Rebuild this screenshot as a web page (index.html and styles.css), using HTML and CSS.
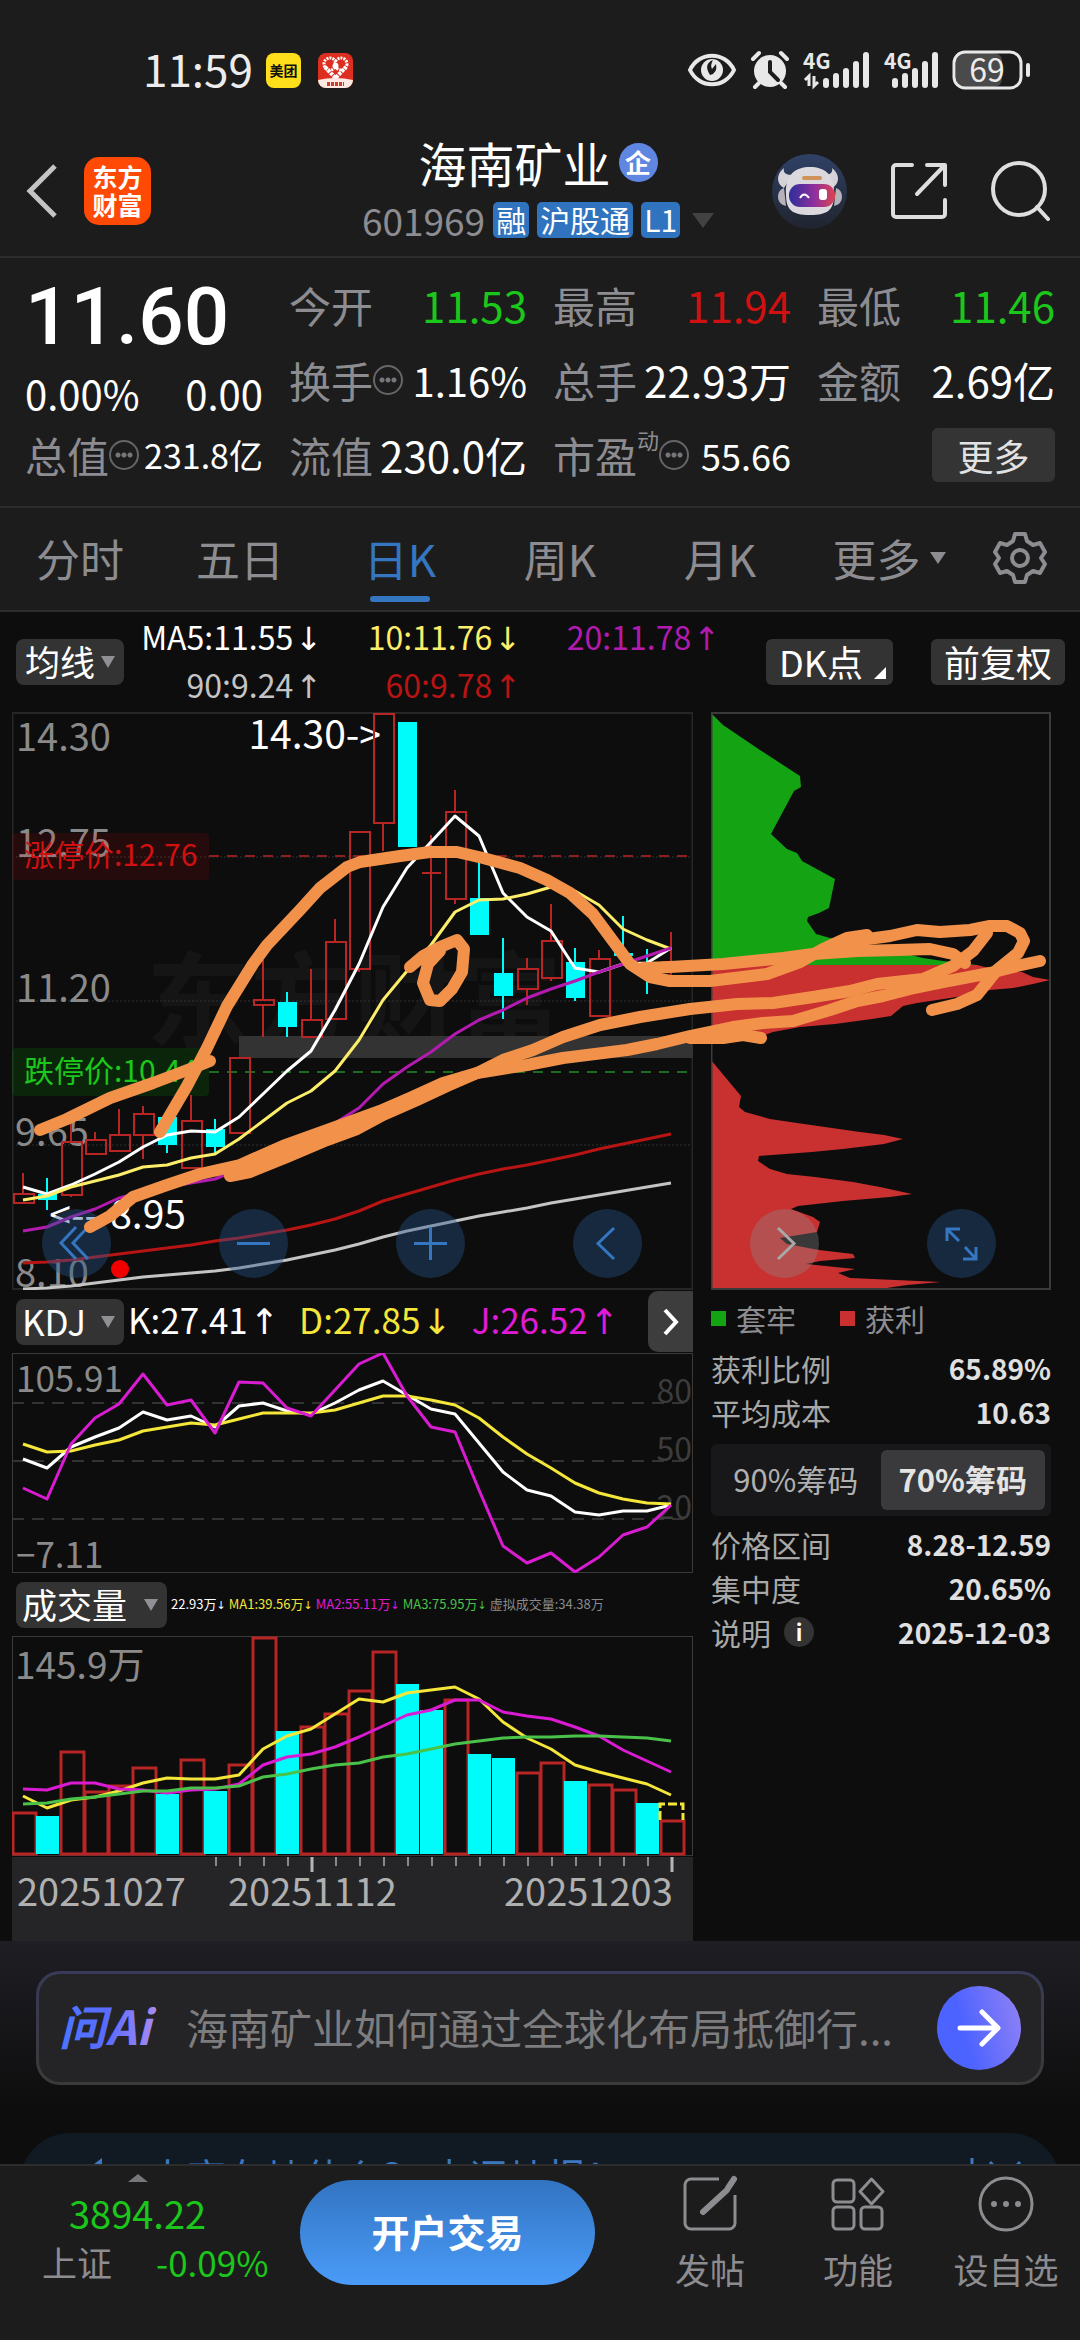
FILE: index.html
```html
<!DOCTYPE html>
<html lang="zh-CN">
<head>
<meta charset="utf-8">
<meta name="viewport" content="width=device-width">
<title>海南矿业 601969</title>
<link rel="stylesheet" href="styles.css">
</head>
<body>
<div class="app">
  <div class="status">
    <span class="clock">11:59</span>
    <span class="app-dot app-dot-yellow">美团</span>
    <span class="app-dot app-dot-red">
      <svg viewBox="0 0 35 35"><circle cx="12" cy="11" r="6" fill="none" stroke="#fff" stroke-width="3" stroke-dasharray="2 1"/><circle cx="23" cy="11" r="6" fill="none" stroke="#fff" stroke-width="3" stroke-dasharray="2 1"/><path d="M7 14 17.500 25 28 14" fill="none" stroke="#fff" stroke-width="4" stroke-dasharray="3 1"/><circle cx="17.500" cy="13" r="3" fill="#fff"/><path d="M0 27q17-4 35 0v8H0z" fill="#ffe9e2"/><path d="M9 31h17" stroke="#c8412f" stroke-width="4" stroke-dasharray="3 1"/></svg>
    </span>
    <span class="status-icons">
      <svg width="50" height="36" viewBox="0 0 50 36"><path d="M3 18C12-1 38-1 47 18 38 37 12 37 3 18z" fill="none" stroke="#e8e8e8" stroke-width="4"/><circle cx="25" cy="18" r="11" fill="#e8e8e8"/><path d="M26 8q-10 4-3 15 8-2 6-11l-4 5q-2-4 1-9z" fill="#1c1c1c"/></svg>
      <svg class="gap-alarm" width="40" height="38" viewBox="0 0 40 38"><circle cx="20" cy="20" r="16" fill="#e8e8e8"/><path d="M3 8l6-6M37 8l-6-6M9 32l-4 4M31 32l4 4" stroke="#e8e8e8" stroke-width="4" stroke-linecap="round"/><path d="M20 11v10l8 8" fill="none" stroke="#1c1c1c" stroke-width="4" stroke-linecap="round"/></svg>
      <svg class="gap-signal" width="68" height="38" viewBox="0 0 68 38"><text x="0" y="18" class="net">4G</text><path d="M6 35V25l-4 4M11 25v10l4-4" fill="none" stroke="#e8e8e8" stroke-width="3"/><path d="M23 30v4M33 25v9M43 20v14M53 13v21M63 4v30" stroke="#e8e8e8" stroke-width="6" stroke-linecap="round"/></svg>
      <svg class="gap-signal" width="56" height="38" viewBox="0 0 56 38"><text x="0" y="18" class="net">4G</text><path d="M11 30v4M21 25v9M31 20v14M41 13v21M51 4v30" stroke="#e8e8e8" stroke-width="6" stroke-linecap="round"/></svg>
      <svg class="gap-battery" width="80" height="42" viewBox="0 0 80 42"><rect x="4" y="4" width="46" height="34" rx="8" fill="#4a4a4a"/><rect x="2" y="3" width="67" height="36" rx="11" fill="none" stroke="#e8e8e8" stroke-width="3"/><path d="M76 16v10" stroke="#e8e8e8" stroke-width="4" stroke-linecap="round"/><text x="35" y="33" class="charge">69</text></svg>
    </span>
  </div>

  <header class="header">
    <div class="header-left">
      <button class="icon-btn" aria-label="返回"><svg width="34" height="56" viewBox="0 0 34 56"><path d="M30 3 5 28l25 25" fill="none" stroke="#c4c4c4" stroke-width="5"/></svg></button>
      <a class="brand" href="#">东方<br>财富</a>
    </div>
    <div class="stock">
      <h1>海南矿业<span class="verify">企</span></h1>
      <div class="code-row">
        <span class="code">601969</span><span class="tag">融</span><span class="tag">沪股通</span><span class="tag">L1</span>
        <svg class="code-arrow" width="22" height="15" viewBox="0 0 22 15"><path d="M0 0h22L11 15z" fill="#424245"/></svg>
      </div>
    </div>
    <div class="header-right">
      <button class="icon-btn" aria-label="助手">
        <svg width="75" height="75" viewBox="0 0 75 75">
          <defs><linearGradient id="sky" x1="0" y1="0" x2="0" y2="1"><stop offset="0" stop-color="#2f4166"/><stop offset="1" stop-color="#20242e"/></linearGradient><linearGradient id="visor"><stop offset="0" stop-color="#2d2f9c"/><stop offset=".55" stop-color="#8f2f9e"/><stop offset="1" stop-color="#dc4450"/></linearGradient></defs>
          <circle cx="37.500" cy="37.500" r="37.500" fill="url(#sky)"/>
          <path d="M12 14C4 20 4 30 12 34l8-13C13 21 11 18 12 14zM60 14c8 6 8 16 0 20l-8-13c7 0 9-3 8-7z" fill="#d6d2d8"/>
          <path d="M12 34q-6 2-6 9t8 9zM64 34q6 2 6 9t-8 9z" fill="#b6b2ba"/>
          <path d="M14 40C13 20 24 13 38 13s25 7 24 27c0 16-6 21-24 21S14 56 14 40z" fill="#dcd9de"/>
          <rect x="30" y="22" width="20" height="4" rx="2" fill="#cf935a"/>
          <rect x="17" y="30" width="46" height="23" rx="11" fill="url(#visor)"/>
          <path d="M28 44q4-7 9 0" fill="none" stroke="#fff" stroke-width="2"/><rect x="47" y="35" width="8" height="11" rx="3" fill="#fff"/>
        </svg>
      </button>
      <button class="icon-btn" aria-label="分享"><svg width="58" height="58" viewBox="0 0 58 58"><path d="M22 3H6a3 3 0 0 0-3 3v46a3 3 0 0 0 3 3h46a3 3 0 0 0 3-3V38M37 3h18v20M54 4 27 32" fill="none" stroke="#dedede" stroke-width="4" stroke-linecap="round" stroke-linejoin="round"/></svg></button>
      <button class="icon-btn" aria-label="搜索"><svg width="60" height="60" viewBox="0 0 60 60"><circle cx="28" cy="28" r="26" fill="none" stroke="#dedede" stroke-width="4"/><path d="M46 46l11 12" stroke="#dedede" stroke-width="4" stroke-linecap="round"/></svg></button>
    </div>
  </header>

  <main class="content">
    <section class="quote">
      <div class="price-block">
        <div class="price">11.60</div>
        <div class="change"><span>0.00%</span><span>0.00</span></div>
      </div>
      <div class="cell"><span class="lbl">今开</span><span class="val down">11.53</span></div>
      <div class="cell"><span class="lbl">最高</span><span class="val up">11.94</span></div>
      <div class="cell"><span class="lbl">最低</span><span class="val down">11.46</span></div>
      <div class="cell"><span class="lbl">换手<i class="more-dot"></i></span><span class="val val-40">1.16%</span></div>
      <div class="cell"><span class="lbl">总手</span><span class="val">22.93万</span></div>
      <div class="cell"><span class="lbl">金额</span><span class="val">2.69亿</span></div>
      <div class="cell"><span class="lbl">总值<i class="more-dot"></i></span><span class="val val-34">231.8亿</span></div>
      <div class="cell"><span class="lbl">流值</span><span class="val">230.0亿</span></div>
      <div class="cell"><span class="lbl">市盈<small>动</small><i class="more-dot"></i></span><span class="val val-36">55.66</span></div>
      <div class="cell cell-end"><button class="more-btn">更多</button></div>
    </section>

    <nav class="tabs">
      <button>分时</button><button>五日</button><button class="active">日K</button><button>周K</button><button>月K</button><button class="tab-more">更多<i class="tri"></i></button>
      <button class="gear" aria-label="设置"><svg width="54" height="54" viewBox="0 0 54 54"><path d="M22 3h10l2 7 6 4 7-2 5 9-4 6 4 6-5 9-7-2-6 4-2 7H22l-2-7-6-4-7 2-5-9 4-6-4-6 5-9 7 2 6-4z" fill="none" stroke="#8c8c91" stroke-width="4" stroke-linejoin="round"/><circle cx="27" cy="27" r="8" fill="none" stroke="#8c8c91" stroke-width="4"/></svg></button>
    </nav>

    <section class="board">
      <div class="ma-bar">
        <label class="pick pick-s"><select aria-label="均线"><option>均线</option></select></label>
        <div class="ma-grid">
          <span class="c-white">MA5:11.55<b>↓</b></span><span class="c-yellow">10:11.76<b>↓</b></span><span class="c-purple">20:11.78<b>↑</b></span>
          <span class="c-grey">90:9.24<b>↑</b></span><span class="c-red">60:9.78<b>↑</b></span>
        </div>
        <div class="ma-actions">
          <button class="chip chip-corner">DK点</button>
          <button class="chip">前复权</button>
        </div>
      </div>

      <div class="charts">
        <svg class="chart" id="kline" viewBox="12 712 681 578">
          <text x="146" y="1040" class="watermark">东方财富</text>
          <path d="M12 857H692M12 1001H692M12 1145H692" stroke="#333" stroke-dasharray="2 2"/>
          <rect x="12.500" y="713" width="680" height="576" fill="none" stroke="#262626" stroke-width="2"/>
          <g class="axis-text"><text x="16" y="751">14.30</text><text x="16" y="857">12.75</text><text x="16" y="1002">11.20</text><text x="15" y="1146">9.65</text><text x="15" y="1287">8.10</text></g>
          <rect x="239" y="1036" width="454" height="22" fill="#333"/>
          <rect x="12" y="833" width="197" height="47" rx="4" fill="#f00" fill-opacity=".1"/>
          <rect x="12" y="1048" width="197" height="48" rx="4" fill="#0f0" fill-opacity=".1"/>
          <path d="M209 856H692" stroke="#8e1f1f" stroke-width="2" stroke-dasharray="10 8"/>
          <path d="M209 1072H692" stroke="#1c6b20" stroke-width="2" stroke-dasharray="10 8"/>
          <text x="24" y="866" class="limit limit-up">涨停价:12.76</text>
          <text x="24" y="1082" class="limit limit-down">跌停价:10.44</text>
          <text x="381" y="749" class="mark">14.30-&gt;</text>
          <text x="186" y="1229" class="mark"><tspan x="98">&lt;--</tspan><tspan x="186">8.95</tspan></text>
          <g id="kline-data"></g>
          <circle cx="120" cy="1269" r="9" fill="#f00000"/>
        </svg>
        <svg class="chart" viewBox="711 712 340 578">
          <path d="M711 713L723 725 760 750 800 776 801 787 794 791 771 834 787 849 797 853 802 861 835 879 829 908 819 913 808 917 807 921 816 934 830 938 877 947 923 958 943 961 977 965H711z" fill="#13a313"/>
          <path d="M711 965H977L993 969 1022 972 1033 977 1050 980 1033 984 1013 988 990 990 963 996 937 1000 917 1003 903 1006 891 1016 872 1019 835 1024 800 1027 773 1032 765 1035 711 1038z" fill="#c93030"/>
          <path d="M711 1060L741 1096 739 1107 745 1112 770 1119 797 1123 832 1128 860 1132 884 1135 903 1139 884 1144 843 1149 812 1152 759 1156 758 1161 770 1169 787 1174 815 1177 853 1182 880 1187 912 1194 890 1197 843 1201 798 1206 791 1209 813 1217 820 1222 817 1232 805 1234 780 1238 787 1244 819 1250 853 1254 855 1258 820 1261 806 1264 855 1269 838 1273 850 1278 941 1282 907 1285 880 1289H711z" fill="#c93030"/>
          <path d="M711.500 713V1289H1050V713z" fill="none" stroke="#3a3a3a" stroke-width="2"/>
        </svg>
        <div class="chart-tools">
          <button aria-label="后退"><svg viewBox="0 0 69 69"><path d="M34 18 19 34l15 16M46 18 31 34l15 16" /></svg></button>
          <button aria-label="缩小"><svg viewBox="0 0 69 69"><path d="M18 34.500h33"/></svg></button>
          <button aria-label="放大"><svg viewBox="0 0 69 69"><path d="M18 34.500h33M34.500 18v33"/></svg></button>
          <button aria-label="左移"><svg viewBox="0 0 69 69"><path d="M41 19 25 34.500 41 50"/></svg></button>
          <button class="off" aria-label="右移"><svg viewBox="0 0 69 69"><path d="M28 19 44 34.500 28 50"/></svg></button>
          <button aria-label="全屏"><svg viewBox="0 0 69 69"><path d="M20 32V20h13M20 20l12 12M49 38v12H36M49 50 38 38"/></svg></button>
        </div>
        <svg class="doodle" viewBox="12 712 1039 578">
          <path d="M160 1132 187 1086 207 1048 227 1006 253 964 267 945 300 910 320 888 347 867 360 862 400 856 430 852 457 852 483 858 520 868 547 880 570 893 593 914 613 941 630 964 650 977 670 981 710 981 767 974 800 962 823 949 847 938 867 935"/>
          <path d="M643 968 670 967 723 964 783 958 813 954 857 951 897 950 930 949 953 954 965 963"/>
          <path d="M823 951 853 941 890 936 917 930 940 932 970 930 990 926 1007 926 1020 933 1024 941 1018 953 997 970 977 995 957 1004 932 1010"/>
          <path d="M987 933 973 951 953 966 923 979 877 984 850 991 813 997 773 1003 737 1004 690 1009 640 1017 600 1025 563 1037 533 1050 503 1060 477 1073 447 1086 417 1100 383 1115 357 1129 327 1140 287 1157 250 1172 230 1176"/>
          <path d="M1040 961 1017 966 990 973 943 982 910 989 883 996 857 1001 830 1010 793 1021 763 1023 733 1027 690 1036 657 1044 627 1050 563 1058 527 1065 477 1073 443 1083 410 1098 380 1111 333 1128 283 1146 240 1165 200 1174 167 1185 133 1197 110 1216 90 1227"/>
          <path d="M690 1038 723 1038 743 1035 761 1038"/>
          <path d="M40 1130 67 1119 110 1098 153 1083 190 1069 210 1061"/>
          <path d="M410 967 423 956 440 947 457 940 464 949 462 972 452 989 440 1001 430 1000 423 983 428 964 440 951"/>
        </svg>
      </div>

      <div class="lower">
        <div class="indicators">
          <div class="ind-bar">
            <label class="pick pick-s pick-in"><select aria-label="指标"><option>KDJ</option></select></label>
            <div class="kdj-vals"><span class="c-white">K:27.41<b>↑</b></span><span class="c-yellow2">D:27.85<b>↓</b></span><span class="c-magenta">J:26.52<b>↑</b></span></div>
            <button class="next" aria-label="更多指标"><svg width="20" height="30" viewBox="0 0 20 30"><path d="M4 3l11 12L4 27" fill="none" stroke="#fff" stroke-width="4"/></svg></button>
          </div>
          <svg class="chart" viewBox="12 1353 681 220">
            <path d="M12 1403H692M12 1461H692M12 1519H692" stroke="#333" stroke-width="2" stroke-dasharray="12 8"/>
            <rect x="12.500" y="1353.500" width="680" height="219" fill="none" stroke="#3a3a3a"/>
            <g class="axis-text"><text x="16" y="1392" class="narrow">105.91</text><text x="16" y="1568" class="narrow">−7.11</text></g>
            <g class="scale-text"><text x="692" y="1403">80</text><text x="692" y="1461">50</text><text x="692" y="1519">20</text></g>
            <g id="kdj-data"></g>
          </svg>
          <div class="ind-bar">
            <label class="pick pick-l pick-in"><select aria-label="副图"><option>成交量</option></select></label>
            <div class="vol-vals"><span class="c-white">22.93万<b>↓</b></span><span class="c-yellow2">MA1:39.56万<b>↓</b></span><span class="c-magenta">MA2:55.11万<b>↓</b></span><span class="c-green">MA3:75.95万<b>↓</b></span><span class="c-dim">虚拟成交量:34.38万</span></div>
          </div>
          <svg class="chart" viewBox="12 1636 681 305">
            <rect x="12" y="1857" width="681" height="84" fill="#252527"/>
            <rect x="12.500" y="1636.500" width="680" height="219" fill="none" stroke="#3a3a3a"/>
            <g class="axis-text"><text x="15" y="1679" class="volume-max">145.9万</text></g>
            <g id="vol-data"></g>
            <path d="M216 1857v9M240 1857v9M264 1857v9M288 1857v9M336 1857v9M360 1857v9M384 1857v9M408 1857v9M432 1857v9M456 1857v9M480 1857v9M504 1857v9M528 1857v9M552 1857v9M576 1857v9M600 1857v9M624 1857v9M648 1857v9" stroke="#8a8a8a" stroke-width="2"/>
            <path d="M312 1857v15M672 1857v15" stroke="#b5b5b5" stroke-width="3"/>
            <g class="date-text"><text x="17" y="1906">20251027</text><text x="228" y="1906">20251112</text><text x="504" y="1906">20251203</text></g>
          </svg>
        </div>

        <aside class="chips">
          <div class="legend"><span class="key key-green">套牢</span><span class="key key-red">获利</span></div>
          <dl>
            <div><dt>获利比例</dt><dd>65.89%</dd></div>
            <div><dt>平均成本</dt><dd>10.63</dd></div>
          </dl>
          <div class="segment"><button>90%筹码</button><button class="on">70%筹码</button></div>
          <dl>
            <div><dt>价格区间</dt><dd>8.28-12.59</dd></div>
            <div><dt>集中度</dt><dd>20.65%</dd></div>
            <div><dt>说明<span class="info">i</span></dt><dd>2025-12-03</dd></div>
          </dl>
        </aside>
      </div>
    </section>

    <section class="ask">
      <form class="ask-box">
        <svg class="ask-logo" width="98" height="46" viewBox="0 0 98 46">
          <defs><linearGradient id="ink" gradientUnits="userSpaceOnUse" x1="0" y1="0" x2="98" y2="0"><stop offset="0" stop-color="#4a76ff"/><stop offset=".5" stop-color="#5b6bff"/><stop offset="1" stop-color="#a98cf0"/></linearGradient></defs>
          <text x="0" y="40" class="ask-word" fill="url(#ink)">问Ai</text>
        </svg>
        <input type="text" aria-label="提问" placeholder="海南矿业如何通过全球化布局抵御行...">
        <button type="button" aria-label="发送"><svg width="44" height="44" viewBox="0 0 44 44"><path d="M3 22h37M25 6l16 16-16 16" fill="none" stroke="#fff" stroke-width="5" stroke-linecap="round" stroke-linejoin="round"/></svg></button>
      </form>
      <div class="promo">
        <svg width="48" height="40" viewBox="0 0 48 40"><path d="M4 12h8L24 3v34L12 28H4z" fill="#3b78c0"/></svg>
        <a href="#">大商在炒什么？ 来评炒报！</a>
        <button class="icon-btn" aria-label="关闭"><svg width="52" height="40" viewBox="0 0 52 40"><path d="M2 3v34M20 7l30 32M50 7 20 39" stroke="#3b78c0" stroke-width="3"/></svg></button>
      </div>
    </section>
  </main>

  <footer class="dock">
    <div class="index">
      <i class="tri-up"></i>
      <strong>3894.22</strong>
      <div><span>上证</span><em>-0.09%</em></div>
    </div>
    <button class="trade">开户交易</button>
    <div class="dock-links">
      <a href="#"><svg width="58" height="58" viewBox="0 0 58 58"><path d="M38 4H10a6 6 0 0 0-6 6v38a6 6 0 0 0 6 6h38a6 6 0 0 0 6-6V20" fill="none" stroke="#8c8c91" stroke-width="3"/><path d="M53 4 47 13M46 15 22 37" stroke="#8c8c91" stroke-width="6" stroke-linecap="round"/></svg>发帖</a>
      <a href="#"><svg width="58" height="58" viewBox="0 0 58 58"><g fill="none" stroke="#8c8c91" stroke-width="3"><rect x="4" y="5" width="21" height="22" rx="4"/><rect x="4" y="32" width="21" height="22" rx="4"/><rect x="32" y="32" width="21" height="22" rx="4"/><path d="M42.500 4 54 16.500 42.500 29 31 16.500z" stroke-linejoin="round"/></g></svg>功能</a>
      <a href="#"><svg width="58" height="58" viewBox="0 0 58 58"><circle cx="29" cy="29" r="26" fill="none" stroke="#8c8c91" stroke-width="3"/><g fill="#8c8c91"><circle cx="17" cy="29" r="3"/><circle cx="29" cy="29" r="3"/><circle cx="41" cy="29" r="3"/></g></svg>设自选</a>
    </div>
  </footer>
</div>
<script src="app.js"></script>
</body>
</html>
```
FILE: styles.css
```css
* { box-sizing: border-box; }
body { margin: 0; background: #1c1c1c; color: #fff; font-family: "Noto Sans CJK SC", "Noto Sans", sans-serif; }
button, input, select { font: inherit; color: inherit; border: 0; background: none; padding: 0; margin: 0; }
a { color: inherit; text-decoration: none; }
svg { display: block; flex: none; }
i, em { font-style: normal; }
b { font-family: "DejaVu Sans", sans-serif; font-weight: 400; margin-left: 2px; }
.app { height: 100vh; display: flex; flex-direction: column; overflow: hidden; }
.content { flex: 1; min-height: 0; overflow: hidden; }

.status { flex: none; height: 136px; padding: 4px 48px 0 143px; display: flex; align-items: center; color: #ececec; }
.status svg { overflow: visible; }
.clock { width: 123px; font-size: 44px; line-height: 50px; padding-bottom: 4px; }
.app-dot { width: 35px; height: 35px; border-radius: 8px; margin-right: 17px; font-size: 14px; line-height: 35px; font-weight: 700; text-align: center; overflow: hidden; }
.app-dot-yellow { background: #ffdf1c; color: #111; }
.app-dot-red { background: #dd2f21; }
.status-icons { margin-left: auto; display: flex; align-items: center; }
.gap-alarm, .gap-signal { margin-left: 13px; }
.gap-battery { margin-left: 12px; }
.net { font-size: 21px; font-weight: 700; fill: #e8e8e8; }
.charge { font-size: 32px; fill: #ececec; text-anchor: middle; }

.header { flex: none; height: 122px; padding: 0 29px 16px 25px; display: grid; grid-template-columns: 1fr auto 1fr; align-items: center; border-bottom: 2px solid #2d2d2d; }
.header-left, .header-right { display: flex; align-items: center; }
.header-left { gap: 25px; }
.header-right { justify-content: flex-end; gap: 43px; }
.brand { width: 67px; height: 68px; border-radius: 15px; background: #fe4a05; font-size: 25px; line-height: 28px; font-weight: 700; text-align: center; padding-top: 5px; }
.stock { display: flex; flex-direction: column; align-items: center; gap: 6px; }
h1 { margin: 0; font-size: 48px; line-height: 52px; font-weight: 400; display: flex; align-items: center; gap: 8px; }
.verify { width: 39px; height: 39px; border-radius: 50%; background: #5f86e0; font-size: 26px; line-height: 38px; font-weight: 700; text-align: center; }
.code-row { display: flex; align-items: center; gap: 8px; height: 52px; }
.code { font-size: 37px; line-height: 40px; color: #8c8c91; }
.tag { background: #3074c0; border-radius: 5px; height: 36px; padding: 0 3px; font-size: 30px; line-height: 34px; }
.code-arrow { margin-left: 4px; }

.quote { display: grid; grid-template-columns: repeat(4, 1fr); grid-auto-rows: 75px; column-gap: 26px; padding: 9px 25px 14px; border-bottom: 2px solid #2d2d2d; }
.price-block { grid-row: span 2; }
.price { font-family: Roboto, sans-serif; font-size: 80px; line-height: 100px; font-weight: 500; }
.change { display: flex; justify-content: space-between; font-size: 40px; line-height: 52px; }
.cell { display: flex; align-items: center; justify-content: space-between; white-space: nowrap; line-height: 54px; }
.cell-end { justify-content: flex-end; }
.lbl { display: flex; align-items: center; font-size: 42px; color: #8c8c91; }
.lbl small { font-size: 22px; line-height: 22px; align-self: flex-start; }
.val { font-size: 42px; }
.val-40 { font-size: 40px; }
.val-36 { font-size: 36px; }
.val-34 { font-size: 34px; }
.down { color: #1bc71b; }
.up { color: #d01111; }
.more-dot { width: 30px; height: 30px; border: 2px solid #66666a; border-radius: 50%; background: radial-gradient(circle, #77777b 2px, transparent 3px) center / 6px 6px repeat-x; background-origin: content-box; background-clip: content-box; padding: 0 4px; }
.more-btn { width: 123px; height: 54px; border-radius: 6px; background: #343434; color: #e2e2e2; font-size: 36px; line-height: 52px; }

.tabs { display: grid; grid-template-columns: repeat(6, 160fr) 120fr; height: 104px; border-bottom: 2px solid #2d2d2d; color: #8c8c91; }
.tabs button { display: flex; align-items: center; justify-content: center; font-size: 44px; line-height: 60px; padding-bottom: 3px; position: relative; }
.tabs .active { color: #3476c0; }
.tabs .active::after { content: ""; position: absolute; bottom: 8px; width: 60px; height: 6px; border-radius: 3px; background: #3476c0; }
.tabs .tab-more { padding-left: 18px; }
.tri { margin-left: 9px; border: 8px solid transparent; border-top: 12px solid #8c8c91; border-bottom: 0; }

.board { background: #0d0d0d; }
.ma-bar { height: 100px; padding: 0 15px 0 16px; display: flex; align-items: center; }
.pick { position: relative; height: 46px; border-radius: 8px; background: #333; flex: none; }
.pick::after { content: ""; position: absolute; right: 9px; top: 17px; border: 7px solid transparent; border-top: 12px solid #909094; border-bottom: 0; pointer-events: none; }
.pick select { appearance: none; width: 100%; height: 44px; padding-left: 9px; font-size: 35px; line-height: 42px; }
.pick-s { width: 108px; }
.pick-l { width: 151px; }
.pick-in select { padding-left: 6px; }
.ma-grid { display: grid; grid-template-columns: 198px 199px 199px; grid-auto-rows: 48px; padding-bottom: 4px; text-align: right; font-size: 32px; line-height: 48px; white-space: nowrap; }
.ma-actions { margin-left: auto; display: flex; gap: 38px; }
.chip { position: relative; height: 46px; padding: 0 13px 2px; border-radius: 6px; background: #333; font-size: 36px; line-height: 44px; }
.chip-corner { padding-right: 30px; }
.chip-corner::after { content: ""; position: absolute; right: 7px; bottom: 6px; border-left: 12px solid transparent; border-bottom: 12px solid #fff; }
.c-white { color: #fff; } .c-yellow { color: #fdee6a; } .c-purple { color: #b31bb0; } .c-grey { color: #c4c4c4; } .c-red { color: #b81414; }
.c-yellow2 { color: #f5e63a; } .c-magenta { color: #e01bd8; } .c-green { color: #4ac24a; } .c-dim { color: #8a8a8a; }

.charts, .lower { display: grid; grid-template-columns: 681fr 340fr; column-gap: 18px; margin: 0 29px 0 12px; align-items: start; }
.charts { position: relative; }
.chart { width: 100%; height: auto; overflow: hidden; }
.doodle { position: absolute; inset: 0; width: 100%; pointer-events: none; overflow: visible; fill: none; stroke: #f2924a; stroke-width: 12; stroke-linecap: round; stroke-linejoin: round; }
.chart-tools { position: absolute; left: 0; right: 0; bottom: 12px; padding: 0 55px 0 30px; display: flex; justify-content: space-between; }
.chart-tools button { width: 69px; height: 69px; border-radius: 50%; background: rgba(38, 86, 140, .4); }
.chart-tools path { fill: none; stroke: #3476c0; stroke-width: 3; }
.chart-tools .off { background: rgba(140, 140, 140, .35); }
.chart-tools .off path { stroke: #a8a8a8; }
.axis-text { font-size: 38px; fill: #8a8a8a; }
.axis-text .narrow { font-size: 35px; }
.axis-text .volume-max { font-size: 37px; }
.scale-text { font-size: 32px; fill: #3c3c3c; text-anchor: end; }
.date-text { font-size: 38px; fill: #b0b0b0; }
.mark { font-size: 39px; fill: #fff; text-anchor: end; }
.limit { font-size: 30px; }
.limit-up { fill: #d01111; }
.limit-down { fill: #1bc71b; }
.watermark { font-size: 104px; font-weight: 700; fill: #151515; }

.indicators { min-width: 0; }
.ind-bar { height: 63px; padding-left: 4px; display: flex; align-items: center; white-space: nowrap; }
.kdj-vals { display: flex; gap: 20px; padding: 0 0 3px 4px; font-size: 35px; line-height: 50px; }
.vol-vals { display: flex; gap: 3px; padding-left: 4px; font-size: 13px; line-height: 30px; }
.vol-vals b { margin: 0; font-size: 11px; }
.next { margin-left: auto; width: 45px; height: 61px; border-radius: 10px 0 0 10px; background: #3d3d3d; display: flex; align-items: center; justify-content: center; }

.legend { display: flex; gap: 44px; height: 56px; align-items: center; font-size: 30px; color: #8c8c91; }
.key { display: flex; align-items: center; gap: 10px; }
.key::before { content: ""; width: 15px; height: 15px; background: #13a313; }
.key-red::before { background: #c93030; }
dl { margin: 0; }
dl div { display: flex; justify-content: space-between; height: 44px; line-height: 44px; }
dt { font-size: 30px; color: #a8a8a8; display: flex; align-items: center; gap: 13px; }
dd { margin: 0; font-size: 28px; font-weight: 700; color: #e0e0e0; }
.segment { display: grid; grid-template-columns: 169fr 164fr; height: 72px; margin: 10px 0 6px; padding: 6px 6px 6px 0; border-radius: 6px; background: #18181a; font-size: 31px; color: #b0b0b0; }
.segment button { padding-bottom: 3px; }
.segment .on { background: #3a3a3c; color: #e4e4e4; font-weight: 700; border-radius: 6px; }
.info { width: 30px; height: 30px; border-radius: 50%; background: #333; color: #fff; font-size: 22px; line-height: 29px; font-weight: 700; text-align: center; }

.ask { padding: 30px 20px 0; background: linear-gradient(#1f1e24, #0d0d0d 170px); }
.ask-box { margin: 0 16px; height: 114px; padding: 0 20px; display: flex; align-items: center; border: 3px solid transparent; border-radius: 24px; background: linear-gradient(#242426, #242426) padding-box, linear-gradient(#383a58, #3c3a3a) border-box; }
.ask-logo { overflow: visible; }
.ask-word { font-size: 47px; font-weight: 700; font-style: italic; }
.ask-box input { flex: 1; min-width: 0; margin-left: 29px; padding-bottom: 3px; font-size: 42px; line-height: 60px; outline: 0; }
.ask-box input::placeholder { color: #7d7d7f; opacity: 1; }
.ask-box button { width: 84px; height: 84px; border-radius: 50%; background: linear-gradient(75deg, #4d63ff 35%, #9383f5); display: flex; align-items: center; justify-content: center; }
.promo { margin-top: 48px; height: 84px; padding: 0 38px 0 58px; border-radius: 50px 50px 0 0; background: #111a22; color: #3b78c0; display: flex; align-items: center; font-size: 39px; }
.promo a { margin-left: 22px; }
.promo .icon-btn { margin-left: auto; }

.dock { position: relative; flex: none; height: 176px; border-top: 2px solid #2d2d2d; padding: 0 19px 0 42px; display: flex; align-items: flex-start; }
.index { width: 258px; flex: none; }
.tri-up { display: block; width: 0; margin: 8px 0 0 86px; border: 10px solid transparent; border-top: 0; border-bottom: 8px solid #77777b; }
.index strong { display: block; margin: 6px 0 0 27px; font-size: 38px; line-height: 50px; font-weight: 400; color: #1bc71b; }
.index div { display: flex; gap: 44px; font-size: 35px; line-height: 48px; color: #8c8c91; }
.index em { color: #1bc71b; }
.trade { width: 295px; height: 105px; margin-top: 14px; padding: 0 0 4px; border-radius: 53px; background: linear-gradient(#3274c2, #4a9bf8); font-size: 38px; font-weight: 700; }
.dock-links { flex: 1; display: flex; justify-content: flex-end; padding-top: 9px; }
.dock-links a { width: 148px; display: flex; flex-direction: column; align-items: center; gap: 11px; font-size: 35px; line-height: 50px; color: #8c8c91; }
.dock-links a:last-child { margin-right: -19px; }
```
FILE: app.js
```js
const NS = 'http://www.w3.org/2000/svg';
const RED = '#b82525', CYAN = '#00fbfb';
const cx = k => 23 + 24 * k;

function add(parent, name, attrs) {
  const el = document.createElementNS(NS, name);
  for (const key in attrs) el.setAttribute(key, attrs[key]);
  parent.appendChild(el);
}
function line(parent, ys, color) {
  const points = ys.map((y, k) => cx(k) + ',' + y).join(' ');
  add(parent, 'polyline', { points, fill: 'none', stroke: color, 'stroke-width': 3, 'stroke-linejoin': 'round' });
}

// [high, body top, body bottom, low, rising]
const candles = [
  [1173,1194,1203,1203,1],[1178,1194,1200,1210,0],[1121,1142,1195,1197,1],[1132,1140,1154,1154,1],
  [1109,1135,1151,1151,1],[1106,1114,1135,1159,1],[1117,1117,1145,1153,0],[1095,1121,1168,1168,1],
  [1119,1129,1147,1153,0],[1058,1058,1133,1133,1],[960,1000,1005,1037,1],[992,1002,1027,1037,0],
  [969,1020,1037,1037,1],[919,942,1019,1019,1],[832,832,969,972,1],[714,714,823,851,1],
  [722,722,847,847,0],[835,873,873,936,1],[790,812,899,904,1],[863,898,935,935,0],
  [938,973,996,1019,0],[958,969,989,1005,1],[904,941,978,981,1],[948,962,998,1001,0],
  [950,959,1016,1016,1],[916,953,956,960,0],[949,963,965,994,0],[932,962,962,976,1]
];
const kline = document.getElementById('kline-data');
candles.forEach(([high, top, bottom, low, up], k) => {
  const color = up ? RED : CYAN;
  if (high < top) add(kline, 'path', { d: `M${cx(k)} ${high}V${top}`, stroke: color, 'stroke-width': 2 });
  if (low > bottom) add(kline, 'path', { d: `M${cx(k)} ${bottom}V${low}`, stroke: color, 'stroke-width': 2 });
  if (up && top === bottom) add(kline, 'path', { d: `M${cx(k) - 9} ${top}h19`, stroke: color, 'stroke-width': 2 });
  else if (up) add(kline, 'rect', { x: cx(k) - 9, y: top, width: 20, height: bottom - top, fill: 'none', stroke: color, 'stroke-width': 2 });
  else add(kline, 'rect', { x: cx(k) - 9, y: top, width: 19, height: bottom - top, fill: color });
});
line(kline, [1263,1262,1260,1257,1254,1251,1248,1245,1241,1238,1234,1230,1225,1219,1211,1201,1194,1187,1180,1174,1169,1165,1160,1155,1149,1144,1139,1134], '#b81414');
line(kline, [1289,1288,1286,1283,1280,1277,1275,1273,1271,1268,1264,1260,1255,1250,1244,1237,1231,1226,1221,1216,1212,1208,1203,1199,1195,1191,1187,1183], '#c4c4c4');
line(kline, [1187,1194,1185,1174,1162,1147,1135,1131,1132,1117,1094,1071,1051,1010,964,907,868,842,816,836,893,917,931,968,972,964,963,948], '#fff');
line(kline, [1200,1196,1187,1181,1175,1167,1165,1158,1154,1139,1121,1103,1091,1071,1040,1000,971,945,912,900,899,894,887,891,905,929,940,949], '#fdee6a');
line(kline, [1231,1227,1217,1209,1198,1192,1187,1183,1179,1169,1159,1152,1140,1123,1108,1084,1067,1052,1034,1020,1010,998,989,981,972,964,956,948], '#b31bb0');

const kdj = document.getElementById('kdj-data');
line(kdj, [1459,1468,1447,1437,1428,1412,1420,1416,1427,1406,1403,1411,1414,1403,1390,1381,1395,1409,1414,1443,1472,1490,1496,1512,1515,1511,1511,1505], '#fff');
line(kdj, [1444,1452,1451,1445,1440,1431,1427,1423,1425,1419,1413,1413,1413,1410,1403,1396,1396,1400,1405,1418,1437,1454,1468,1483,1493,1499,1503,1504], '#f5e63a');
line(kdj, [1488,1499,1444,1418,1404,1374,1405,1400,1433,1382,1383,1408,1416,1390,1364,1353,1396,1427,1432,1490,1546,1563,1553,1572,1557,1535,1527,1505], '#d91bd2');

// [top, rising]
const volumes = [
  [1812,1],[1816,0],[1751,1],[1791,1],[1785,1],[1767,1],[1794,0],[1759,1],[1791,0],[1764,1],
  [1637,1],[1731,0],[1726,1],[1713,1],[1690,1],[1651,1],[1684,0],[1710,0],[1699,1],[1754,0],
  [1758,0],[1772,1],[1762,1],[1781,0],[1784,1],[1789,1],[1803,0],[1820,1]
];
const vol = document.getElementById('vol-data');
volumes.forEach(([top, up], k) => {
  if (up) add(vol, 'rect', { x: cx(k) - 10, y: top + 1, width: 23, height: 1853 - top, fill: 'none', stroke: RED, 'stroke-width': 3 });
  else add(vol, 'rect', { x: cx(k) - 11, y: top, width: 23, height: 1854 - top, fill: CYAN });
});
add(vol, 'path', { d: 'M660 1820V1804H683V1820', fill: 'none', stroke: '#f5e63a', 'stroke-width': 3, 'stroke-dasharray': '9 3' });
line(vol, [1796,1808,1800,1797,1791,1783,1778,1779,1779,1775,1749,1736,1729,1714,1699,1702,1693,1690,1687,1699,1722,1738,1749,1765,1772,1778,1784,1795], '#f5e63a');
line(vol, [1789,1790,1783,1783,1789,1790,1793,1790,1789,1784,1765,1757,1754,1747,1737,1726,1715,1710,1700,1700,1712,1716,1719,1727,1736,1750,1761,1772], '#d91bd2');
line(vol, [1804,1803,1799,1797,1794,1791,1791,1788,1788,1786,1777,1774,1769,1765,1763,1757,1754,1749,1744,1741,1738,1737,1737,1736,1736,1737,1738,1741], '#4ac24a');
```
